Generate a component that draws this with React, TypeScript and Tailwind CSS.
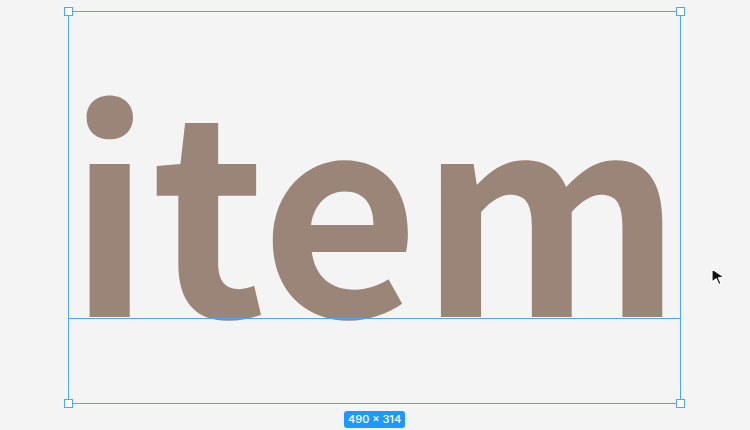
import React from 'react';

const Handle: React.FC<{ className: string }> = ({ className }) => (
  <div className={`absolute h-[9px] w-[9px] border-[1.5px] border-[#4aa8f7] bg-white ${className}`} />
);

export default function App() {
  return (
    <div className="relative h-[430px] w-[750px] overflow-hidden bg-[#f4f4f4]">
      {/* selection frame */}
      <div className="absolute left-[68px] top-[11px] h-[393px] w-[613px] border border-[#4aa8f7]">
        <div
          className="absolute left-[-1px] top-[50px] text-[273px] font-bold leading-none text-[#9b8579] select-none"
          style={{ fontFamily: '"Noto Sans CJK SC", sans-serif' }}
        >
          item
        </div>
        {/* baseline */}
        <div className="absolute left-0 right-0 top-[306px] h-px bg-[#4aa8f7]" />
        <Handle className="left-[-5px] top-[-5px]" />
        <Handle className="right-[-5px] top-[-5px]" />
        <Handle className="left-[-5px] bottom-[-5px]" />
        <Handle className="right-[-5px] bottom-[-5px]" />
      </div>

      {/* size badge */}
      <div className="absolute left-[344px] top-[411px] flex h-[17px] items-center rounded-[3px] bg-[#1a9bfb] px-[4px] text-[11px] font-medium text-white" style={{ fontFamily: 'Inter, sans-serif' }}>
        490 × 314
      </div>

      {/* cursor */}
      <svg className="absolute left-[710px] top-[268px]" width="16" height="18" viewBox="0 0 16 18">
        <path d="M2 1 L14 9 L8.5 9.8 L11 15.5 L8.8 16.5 L6.3 10.8 L2 14 Z" fill="#111" stroke="#fff" strokeWidth="1.2" strokeLinejoin="round" />
      </svg>
    </div>
  );
}
